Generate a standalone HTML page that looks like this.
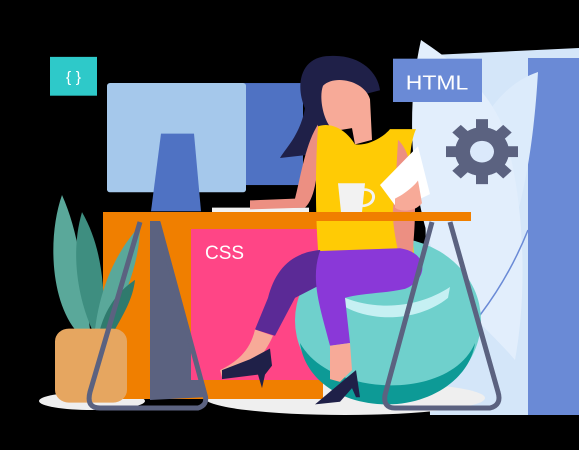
<!DOCTYPE html>
<html><head><meta charset="utf-8"><style>
html,body{margin:0;padding:0;background:#000;width:579px;height:450px;overflow:hidden}
svg{display:block}
text{font-family:"Liberation Sans",sans-serif}
</style></head><body>
<svg width="579" height="450" viewBox="0 0 579 450" xmlns="http://www.w3.org/2000/svg">
<rect width="579" height="450" fill="#000"/>
<!-- right bg panel -->
<path d="M421 40 L432 55 L579 48 L579 415 L430 415 Z" fill="#d4e6f9"/>
<rect x="528" y="58" width="51" height="357" fill="#6a8ad6"/>
<path d="M538 72 C500 85 470 125 462 190 C458 250 462 290 455 320 C500 290 530 210 538 72Z" fill="#dcebfb"/>
<path d="M421 40 C405 110 410 200 440 270 C460 310 490 330 515 360 C528 290 525 190 500 120 C480 80 450 60 421 40Z" fill="#e2eefc"/>
<path d="M528 230 C500 300 460 340 440 360" stroke="#6a8ad6" stroke-width="1.5" fill="none"/>
<!-- floor shadows -->
<ellipse cx="92" cy="401" rx="53" ry="9" fill="#efefef"/>
<ellipse cx="345" cy="398" rx="140" ry="17" fill="#efefef"/>
<g transform="scale(1,0.9027)">
<!-- {} box -->
<rect x="50" y="63" width="47" height="43" fill="#2ec9c9"/>
<text x="73.5" y="91" font-size="16" fill="#fff" text-anchor="middle">{ }</text>
<!-- monitor -->
<rect x="243" y="92" width="60" height="113" fill="#4f72c3"/>
<rect x="107" y="92" width="139" height="121" rx="3" fill="#a5c8eb"/>
<path d="M161 148 L194 148 L201 234 L151 234Z" fill="#4f72c3"/>
<rect x="212" y="230" width="97" height="5" fill="#f2f2f2"/>
<!-- HTML -->
<rect x="393" y="65" width="89" height="48" fill="#6a8ad6"/>
<text x="437" y="99" font-size="23" fill="#fff" text-anchor="middle">HTML</text>
<!-- gear -->
<g transform="translate(482,168)" fill="#5b6280">
<circle r="27"/>
<g id="t"><rect x="-6" y="-36" width="12" height="12"/></g>
<use href="#t" transform="rotate(45)"/><use href="#t" transform="rotate(90)"/><use href="#t" transform="rotate(135)"/>
<use href="#t" transform="rotate(180)"/><use href="#t" transform="rotate(225)"/><use href="#t" transform="rotate(270)"/><use href="#t" transform="rotate(315)"/>
<circle r="12" fill="#dbe9fb"/>
</g>
</g>
<!-- desk front panels (true coords) -->
<rect x="103" y="221" width="220" height="178" fill="#f07f00"/>
<path d="M150 221 L160 221 L208 397 L150 400Z" fill="#5b6280"/>
<rect x="191" y="229" width="130" height="151" fill="#ff4586"/>
<text x="205" y="259" font-size="19" fill="#fff">CSS</text>
<g transform="scale(1,0.9027)">
<!-- plant -->
<path d="M62 216 C48 260 50 330 75 365 L90 365 C85 320 80 260 62 216Z" fill="#5aa89a"/>
<path d="M82 235 C70 280 78 330 92 365 L104 365 C105 310 100 270 82 235Z" fill="#3e8e80"/>
<path d="M140 250 C115 280 100 320 95 365 L108 365 C125 330 140 290 140 250Z" fill="#5aa89a"/>
<path d="M135 310 C115 325 105 345 100 365 L115 365 C125 345 133 330 135 310Z" fill="#2f7a6d"/>
<rect x="55" y="364" width="72" height="82" rx="14" fill="#e6a660"/>
<!-- ball -->
<ellipse cx="388" cy="355" rx="93" ry="92" fill="#6fd0cc"/>
<path d="M300 380 C330 440 450 445 475 380 C470 420 430 448 388 448 C340 448 305 420 300 380Z" fill="#0d9a96"/>
<path d="M345 330 C380 345 420 340 450 318 L448 330 C420 355 375 358 345 340Z" fill="#c6f0f3"/>
<!-- woman -->
<path d="M330 62 C300 62 295 95 305 120 C300 150 285 165 280 175 L320 170 L345 110 L380 100 C378 80 360 60 330 62Z" fill="#1f2048"/>
<path d="M323 95 C318 110 325 140 335 145 L352 142 L355 160 L372 155 L370 110 C365 90 335 82 323 95Z" fill="#f7aa98"/>
<path d="M318 138 C305 160 300 200 295 220 L250 222 L250 232 L305 230 C315 220 320 190 318 138Z" fill="#ec8f82"/>
<path d="M318 140 C330 135 345 142 355 160 C370 162 385 150 390 143 L416 143 C405 170 410 230 415 295 L320 300 C315 250 315 190 318 140Z" fill="#ffcb05"/>
<path d="M398 155 C408 165 415 190 415 230 C415 260 412 280 412 295 L400 290 C395 260 390 240 395 215Z" fill="#ec8f82"/>
<path d="M320 277 C290 280 275 300 268 330 L255 365 L275 372 L295 330 L330 310Z" fill="#5b2a96"/>
<path d="M320 278 L400 275 C430 280 428 310 405 320 C385 325 360 325 345 330 L350 380 L330 383 C320 340 310 310 320 278Z" fill="#8a38d8"/>
<path d="M255 365 L273 372 C268 385 262 392 258 400 L250 405 L222 418 L220 410 C235 402 250 390 255 365Z" fill="#f7aa98"/>
<path d="M222 410 L250 398 L270 386 L272 405 L265 415 L262 430 L258 415 L222 420Z" fill="#1f2048"/>
<path d="M330 383 L350 380 L352 410 L340 423 L330 420Z" fill="#f7aa98"/>
<path d="M315 448 L345 420 L356 410 L360 440 L356 440 L352 430 L340 445Z" fill="#1f2048"/>
<path d="M338 203 L365 203 L362 235 L341 235Z" fill="#f2f2f2"/>
<path d="M364 210 C378 210 376 228 362 228" stroke="#f2f2f2" stroke-width="3" fill="none"/>
<path d="M380 205 L418 162 L430 215 L398 232Z" fill="#fff"/>
<path d="M395 220 C405 215 415 205 418 200 L422 225 C415 235 400 235 395 230Z" fill="#f7aa98"/>
</g>
<!-- desk top -->
<rect x="103" y="212" width="368" height="9" fill="#f07f00"/>
<!-- legs -->
<g stroke="#5b6280" stroke-width="5" fill="none" stroke-linejoin="round">
<path d="M140 222 L90 392 Q86 408 100 408 L198 408 Q208 405 205 395 L158 222"/>
<path d="M432 222 L385 395 Q383 408 395 408 L490 408 Q502 405 498 392 L450 222"/>
</g>
</svg>
</body></html>
